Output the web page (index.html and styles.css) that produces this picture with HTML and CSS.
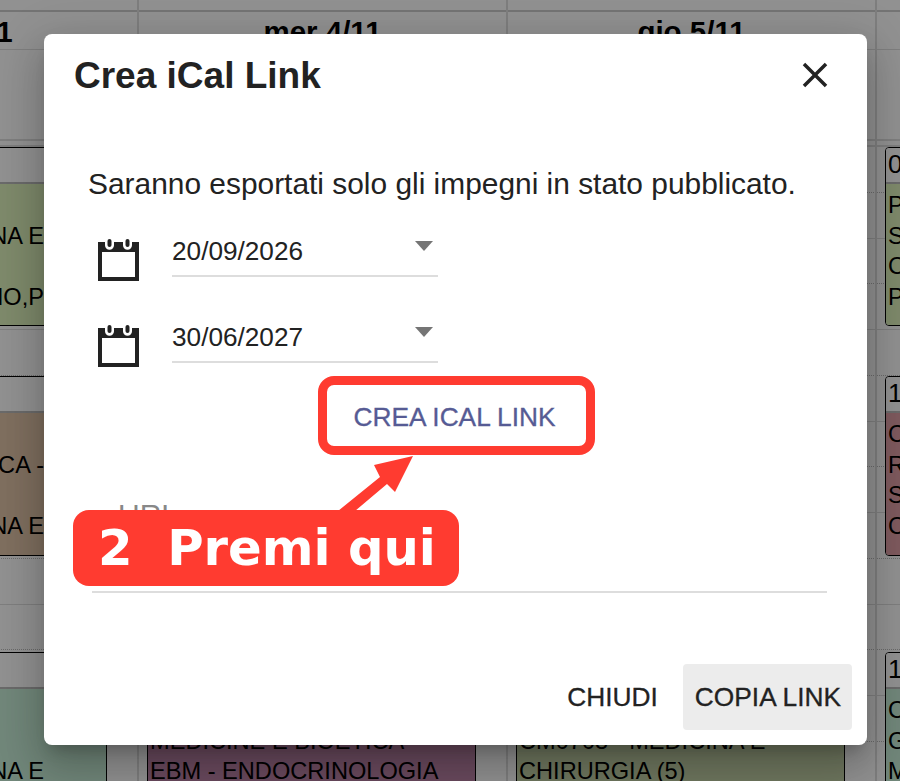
FILE: index.html
```html
<!DOCTYPE html>
<html lang="en">
<head>
  <meta charset="UTF-8" />
  <meta name="viewport" content="width=device-width, initial-scale=1" />
  <title>Crea iCal Link</title>
  <link rel="stylesheet" href="styles.css">
</head>
<body>

  <!-- Calendar behind the dialog -->
  <div class="calendar">
    <div class="cal-top"></div>
    <div class="cal-head">
      <div class="cal-head-cell">mar 3/11</div>
      <div class="cal-head-cell">mer 4/11</div>
      <div class="cal-head-cell">gio 5/11</div>
      <div class="cal-head-cell"></div>
    </div>
    <div class="cal-allday">
      <div></div><div></div><div></div><div></div>
    </div>
    <div class="cal-body">
      <div class="slots">
        <div class="slot half"></div><div class="slot"></div>
        <div class="slot half"></div><div class="slot"></div>
        <div class="slot half"></div><div class="slot"></div>
        <div class="slot half"></div><div class="slot"></div>
        <div class="slot half"></div><div class="slot"></div>
        <div class="slot half"></div><div class="slot"></div>
        <div class="slot half"></div><div class="slot"></div>
      </div>
      <div class="days">
        <div class="day day-first">
          <div class="event ev-one">
            <div class="event-head"></div>
            <div class="event-text ev-green"><p>&nbsp;</p><p>NA E</p><p>&nbsp;</p><p>NO,P</p></div>
          </div>
          <div class="event ev-two">
            <div class="event-head"></div>
            <div class="event-text ev-tan"><p>&nbsp;</p><p>CA -</p><p>&nbsp;</p><p>NA E</p></div>
          </div>
          <div class="event ev-three">
            <div class="event-head"></div>
            <div class="event-text ev-teal"><p>&nbsp;</p><p>&nbsp;</p><p>NA E</p></div>
          </div>
        </div>
        <div class="day">
          <div class="event ev-three">
            <div class="event-head"></div>
            <div class="event-text ev-purple"><p>&nbsp;</p><p>MEDICINE E BIOETICA</p><p>EBM - ENDOCRINOLOGIA</p></div>
          </div>
        </div>
        <div class="day">
          <div class="event ev-three">
            <div class="event-head"></div>
            <div class="event-text ev-olive"><p>&nbsp;</p><p>CM0703 - MEDICINA E</p><p>CHIRURGIA (5)</p></div>
          </div>
        </div>
        <div class="day">
          <div class="event ev-one">
            <div class="event-head">0</div>
            <div class="event-text ev-green"><p>P</p><p>S</p><p>C</p><p>P</p></div>
          </div>
          <div class="event ev-two">
            <div class="event-head">1</div>
            <div class="event-text ev-mauve"><p>C</p><p>R</p><p>S</p><p>C</p></div>
          </div>
          <div class="event ev-three">
            <div class="event-head">1</div>
            <div class="event-text ev-teal"><p>C</p><p>G</p><p>M</p></div>
          </div>
        </div>
      </div>
    </div>
  </div>

  <div class="backdrop"></div>

  <div class="dialog">
    <div class="dialog-title">
      <h2>Crea iCal Link</h2>
      <svg class="close-icon" viewBox="0 0 24 24"><path d="M19 6.41 17.59 5 12 10.59 6.41 5 5 6.41 10.59 12 5 17.59 6.41 19 12 13.41 17.59 19 19 17.59 13.41 12z"/></svg>
    </div>
    <div class="dialog-content">
      <p class="notice">Saranno esportati solo gli impegni in stato pubblicato.</p>

      <div class="date-row">
        <svg class="cal-icon" viewBox="0 0 41 42"><path fill-rule="evenodd" d="M0 3h7v3.200a4.500 4.500 0 0 0 9 0V3h9v3.200a4.500 4.500 0 0 0 9 0V3h7v39H0zM4 13v25h33V13z"/><rect x="9.500" y="0" width="4" height="8" rx="2"/><rect x="27.500" y="0" width="4" height="8" rx="2"/></svg>
        <div class="date-field">
          <span>20/09/2026</span>
          <i class="caret"></i>
        </div>
      </div>

      <div class="date-row">
        <svg class="cal-icon" viewBox="0 0 41 42"><path fill-rule="evenodd" d="M0 3h7v3.200a4.500 4.500 0 0 0 9 0V3h9v3.200a4.500 4.500 0 0 0 9 0V3h7v39H0zM4 13v25h33V13z"/><rect x="9.500" y="0" width="4" height="8" rx="2"/><rect x="27.500" y="0" width="4" height="8" rx="2"/></svg>
        <div class="date-field">
          <span>30/06/2027</span>
          <i class="caret"></i>
        </div>
      </div>

      <div class="create-row">
        <button class="btn btn-primary">CREA ICAL LINK</button>
      </div>

      <div class="url-field">
        <label>URL</label>
      </div>
    </div>
    <div class="dialog-actions">
      <button class="btn">CHIUDI</button>
      <button class="btn btn-hover">COPIA LINK</button>
    </div>
  </div>

  <!-- Tutorial annotation on top of the dialog -->
  <div class="mark-box"></div>
  <svg class="mark-arrow" viewBox="0 0 900 781"><polygon points="413,456 374,465 380,477 338,511 355,511 387,484 395,492"/></svg>
  <div class="mark-label">2  Premi qui</div>

</body>
</html>
```

FILE: styles.css
```css
body {
  margin: 0;
  width: 900px;
  height: 781px;
  overflow: hidden;
  position: relative;
  font-family: "Liberation Sans", Arial, sans-serif;
  color: #222;
  background: #fff;
}

/* Calendar */
.calendar {
  margin-left: -230px;
  width: 1476px;
  color: #000;
}

.cal-top {
  height: 10px;
  border-bottom: 2px solid #ccc;
}

.cal-head {
  display: grid;
  grid-template-columns: repeat(4, 369px);
  height: 37px;
  border-bottom: 1px solid #ddd;
}

.cal-head-cell {
  border-right: 2px solid #ddd;
  text-align: center;
  font-size: 29.5px;
  font-weight: bold;
  line-height: 40px;
}

.cal-allday {
  display: grid;
  grid-template-columns: repeat(4, 369px);
  height: 89px;
  border-bottom: 2px solid #ddd;
}

.cal-allday div {
  border-right: 2px solid #ddd;
}

.cal-body {
  position: relative;
  border-top: 2px solid #ddd;
  margin-top: 4px;
}

.slot {
  height: 44.75px;
  border-bottom: 1px solid #ddd;
}

.slot.half {
  border-bottom: 1px dotted #bbb;
}

.days {
  position: absolute;
  top: -147px;
  left: 0;
  height: 781px;
  display: grid;
  grid-template-columns: repeat(4, 369px);
}

.day {
  position: relative;
  height: 781px;
  overflow: hidden;
  border-right: 2px solid #ddd;
  box-sizing: border-box;
}

.event {
  position: absolute;
  left: 8px;
  width: 329px;
  box-sizing: border-box;
  border: 1.5px solid #000;
  border-radius: 4px;
  overflow: hidden;
  font-size: 23.6px;
  line-height: 30.5px;
}

.ev-one { top: 147px; height: 179px; }
.ev-two { top: 376px; height: 180px; }
.ev-three { top: 652px; height: 180px; }

.event-head {
  height: 34px;
  padding-left: 2px;
  border-bottom: 2px solid #bbb;
  background: #fff;
  line-height: 33px;
  font-size: 26px;
}

.event-text {
  height: 100%;
  padding: 6px 2px 0;
}

.event-text p {
  margin: 0;
}

.day-first .event-text {
  text-align: right;
  padding-right: 62px;
}

.ev-green { background: #ddf2bd; }
.ev-tan { background: #dfc3a8; }
.ev-mauve { background: #dd9ea5; }
.ev-teal { background: #c7edd6; }
.ev-purple { background: #ba82a5; }
.ev-olive { background: #c4d2a7; }

.backdrop {
  position: absolute;
  inset: 0;
  background: rgba(0, 0, 0, 0.43);
}

/* Dialog */
.dialog {
  position: absolute;
  left: 44px;
  top: 34px;
  width: 823px;
  height: 711px;
  display: flex;
  flex-direction: column;
  box-sizing: border-box;
  background: #fff;
  border-radius: 8px;
  box-shadow: 0 11px 15px -7px rgba(0, 0, 0, 0.2), 0 24px 38px 3px rgba(0, 0, 0, 0.14), 0 9px 46px 8px rgba(0, 0, 0, 0.12);
}

.dialog-title {
  display: flex;
  justify-content: space-between;
  align-items: center;
  height: 84px;
  padding: 0 32px 0 30px;
}

.dialog-title h2 {
  margin: 0;
  font-size: 37px;
  font-weight: bold;
}

.close-icon {
  width: 42px;
  height: 42px;
  margin: -3px -1px 0 0;
  fill: #222;
}

.dialog-content {
  flex: 1;
  padding: 46px 40px 0 44px;
}

.notice {
  margin: 0 0 23px;
  font-size: 29.9px;
  line-height: 40px;
}

.date-row {
  display: flex;
  align-items: flex-start;
  height: 86px;
  padding-left: 10px;
}

.cal-icon {
  width: 41px;
  height: 42px;
  margin-top: 12px;
  fill: #222;
}

.date-field {
  position: relative;
  width: 266px;
  height: 48px;
  margin-left: 33px;
  border-bottom: 2px solid #ddd;
  font-size: 26.2px;
  line-height: 48px;
}

.caret {
  position: absolute;
  right: 5px;
  top: 14px;
  border-left: 9px solid transparent;
  border-right: 9px solid transparent;
  border-top: 10px solid #757575;
}

.create-row {
  display: flex;
  justify-content: center;
  margin-top: -15px;
  padding-right: 6px;
}

.btn {
  border: 0;
  padding: 1px 11px 0;
  height: 66px;
  background: none;
  border-radius: 4px;
  font-family: inherit;
  font-size: 26.3px;
  color: #222;
  -webkit-text-stroke: 0.3px currentColor;
}

.btn-primary {
  color: #565b94;
}

.btn-hover {
  padding-left: 12px;
  background: #ececec;
}

.url-field {
  height: 141px;
  margin: 0 0 0 4px;
  border-bottom: 2px solid #ddd;
}

.url-field label {
  display: block;
  padding: 48px 0 0 26px;
  font-size: 30px;
  color: #888;
}

.dialog-actions {
  display: flex;
  justify-content: flex-end;
  align-items: center;
  gap: 14px;
  padding: 0 15px 15px 0;
}

/* Annotation */
.mark-box {
  position: absolute;
  left: 318px;
  top: 376px;
  width: 277px;
  height: 79px;
  box-sizing: border-box;
  border: 9px solid #ff3b30;
  border-radius: 16px;
}

.mark-arrow {
  position: absolute;
  inset: 0;
  width: 900px;
  height: 781px;
  fill: #ff3b30;
}

.mark-label {
  position: absolute;
  left: 73px;
  top: 510px;
  width: 386px;
  height: 76px;
  box-sizing: border-box;
  padding-left: 25px;
  background: #ff3b30;
  border-radius: 16px;
  color: #fff;
  font-family: "DejaVu Sans", sans-serif;
  font-size: 49.7px;
  font-weight: bold;
  line-height: 76px;
  white-space: pre;
}
```
